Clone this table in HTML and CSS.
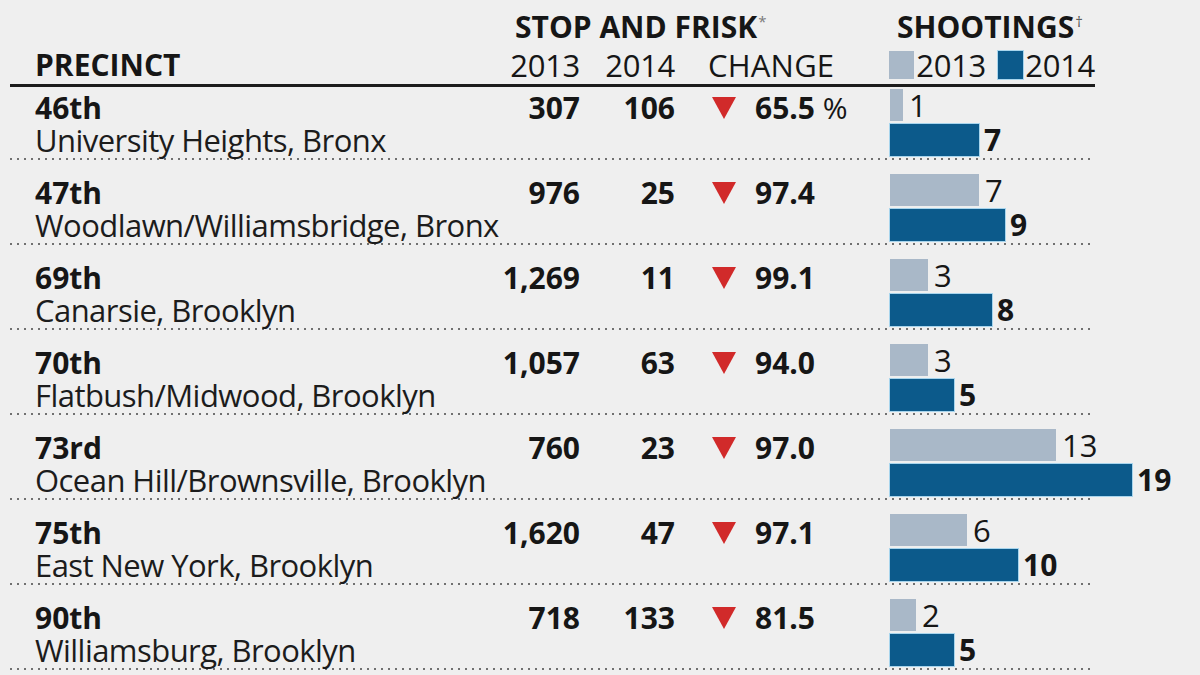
FILE: index.html
```html
<!DOCTYPE html>
<html lang="en">
<head>
<meta charset="utf-8">
<title>Stop and Frisk vs Shootings</title>
<link rel="stylesheet" href="styles.css">
</head>
<body>
<div class="chart">
  <div class="head">
    <div class="grid head-top">
      <div class="saf">STOP AND FRISK<span class="mark">*</span></div>
      <div class="sht">SHOOTINGS<span class="mark dag">†</span></div>
    </div>
    <div class="grid head-bot">
      <div class="hprec">PRECINCT</div>
      <div class="num reg">2013</div>
      <div class="num reg">2014</div>
      <div class="hchg">CHANGE</div>
      <div class="legend">
        <span class="sw sw-light"></span><span class="lg">2013</span>
        <span class="sw sw-dark"></span><span class="lg">2014</span>
      </div>
    </div>
  </div>

  <div class="grid row first">
    <div class="name">46th</div>
    <div class="num">307</div>
    <div class="num">106</div>
    <div class="chg"><span class="tri"></span><span class="pct">65.5<span class="pc"> %</span></span></div>
    <div class="hood">University Heights, Bronx</div>
    <div class="bars">
      <div class="bar-row"><span class="bar light" style="width:13px"></span><span class="bl">1</span></div>
      <div class="bar-row"><span class="bar dark" style="width:89px"></span><span class="bd">7</span></div>
    </div>
  </div>

  <div class="grid row">
    <div class="name">47th</div>
    <div class="num">976</div>
    <div class="num">25</div>
    <div class="chg"><span class="tri"></span><span class="pct">97.4</span></div>
    <div class="hood">Woodlawn/Williamsbridge, Bronx</div>
    <div class="bars">
      <div class="bar-row"><span class="bar light" style="width:89px"></span><span class="bl">7</span></div>
      <div class="bar-row"><span class="bar dark" style="width:115px"></span><span class="bd">9</span></div>
    </div>
  </div>

  <div class="grid row">
    <div class="name">69th</div>
    <div class="num">1,269</div>
    <div class="num">11</div>
    <div class="chg"><span class="tri"></span><span class="pct">99.1</span></div>
    <div class="hood">Canarsie, Brooklyn</div>
    <div class="bars">
      <div class="bar-row"><span class="bar light" style="width:38px"></span><span class="bl">3</span></div>
      <div class="bar-row"><span class="bar dark" style="width:102px"></span><span class="bd">8</span></div>
    </div>
  </div>

  <div class="grid row">
    <div class="name">70th</div>
    <div class="num">1,057</div>
    <div class="num">63</div>
    <div class="chg"><span class="tri"></span><span class="pct">94.0</span></div>
    <div class="hood">Flatbush/Midwood, Brooklyn</div>
    <div class="bars">
      <div class="bar-row"><span class="bar light" style="width:38px"></span><span class="bl">3</span></div>
      <div class="bar-row"><span class="bar dark" style="width:64px"></span><span class="bd">5</span></div>
    </div>
  </div>

  <div class="grid row">
    <div class="name">73rd</div>
    <div class="num">760</div>
    <div class="num">23</div>
    <div class="chg"><span class="tri"></span><span class="pct">97.0</span></div>
    <div class="hood">Ocean Hill/Brownsville, Brooklyn</div>
    <div class="bars">
      <div class="bar-row"><span class="bar light" style="width:166px"></span><span class="bl">13</span></div>
      <div class="bar-row"><span class="bar dark" style="width:242px"></span><span class="bd">19</span></div>
    </div>
  </div>

  <div class="grid row">
    <div class="name">75th</div>
    <div class="num">1,620</div>
    <div class="num">47</div>
    <div class="chg"><span class="tri"></span><span class="pct">97.1</span></div>
    <div class="hood">East New York, Brooklyn</div>
    <div class="bars">
      <div class="bar-row"><span class="bar light" style="width:77px"></span><span class="bl">6</span></div>
      <div class="bar-row"><span class="bar dark" style="width:128px"></span><span class="bd">10</span></div>
    </div>
  </div>

  <div class="grid row">
    <div class="name">90th</div>
    <div class="num">718</div>
    <div class="num">133</div>
    <div class="chg"><span class="tri"></span><span class="pct">81.5</span></div>
    <div class="hood">Williamsburg, Brooklyn</div>
    <div class="bars">
      <div class="bar-row"><span class="bar light" style="width:26px"></span><span class="bl">2</span></div>
      <div class="bar-row"><span class="bar dark" style="width:64px"></span><span class="bd">5</span></div>
    </div>
  </div>
</div>
</body>
</html>
```

FILE: styles.css
```css
html, body {
  margin: 0;
  padding: 0;
  background: #efefef;
}

body {
  font-family: "Open Sans", "Noto Sans", sans-serif;
  font-size: 30px;
  line-height: 32px;
  color: #161616;
  overflow: hidden;
}

.chart {
  margin-left: 10px;
  width: 1085px;
}

.grid {
  display: grid;
  grid-template-columns: 420px 125px 95px 215px 205px;
  padding-left: 25px;
}

/* header */
.head {
  padding-top: 11px;
  padding-bottom: 3px;
  border-bottom: 3px solid #1c1c1c;
}

.head-top {
  font-weight: 700;
  height: 32px;
}

.saf {
  grid-column: 2 / 5;
  padding-left: 60px;
  white-space: nowrap;
}

.sht {
  grid-column: 5;
  white-space: nowrap;
  padding-left: 7px;
}

.mark {
  font-size: 15px;
  font-weight: 400;
  color: #7a7a7a;
  vertical-align: top;
  line-height: 20px;
  margin-left: 1px;
}

.dag {
  color: #555;
}

.head-bot {
  margin-top: 6px;
  height: 32px;
}

.hprec {
  font-weight: 700;
}

.num {
  text-align: right;
  font-weight: 700;
  white-space: nowrap;
}

.num.reg {
  font-weight: 400;
  font-size: 31px;
  letter-spacing: -0.3px;
}

.hchg {
  padding-left: 33px;
  font-size: 31px;
  letter-spacing: 0.2px;
}

.legend {
  display: flex;
  align-items: center;
  margin-left: -1px;
  font-size: 31px;
  letter-spacing: -0.3px;
}

.sw {
  display: inline-block;
  width: 27px;
  height: 28px;
}

.sw-light {
  background: #a9b8c8;
}

.sw-dark {
  background: #0c5a8b;
  margin-left: 12px;
  box-shadow: 0 0 0 1px rgba(120, 195, 235, 0.6);
}

.lg {
  margin-left: 2px;
}

/* rows */
.row {
  grid-template-rows: 32px 32px;
  padding-top: 17px;
  padding-bottom: 4px;
  background-image: linear-gradient(to right, #707070 0 2px, transparent 2px);
  background-size: 7px 2px;
  background-repeat: repeat-x;
  background-position: 0 100%;
}

.row.first {
  padding-top: 5px;
}

.name {
  font-weight: 700;
}

.hood {
  grid-column: 1 / 5;
  grid-row: 2;
  white-space: nowrap;
  font-size: 31px;
  letter-spacing: -0.55px;
  color: #1c1c1c;
}

.chg {
  display: flex;
  align-items: flex-start;
  font-weight: 700;
}

.tri {
  width: 0;
  height: 0;
  margin-left: 37px;
  margin-top: 5px;
  border-left: 12px solid transparent;
  border-right: 12px solid transparent;
  border-top: 22px solid #d12a2a;
}

.pct {
  margin-left: 19px;
  white-space: nowrap;
}

.pc {
  font-weight: 400;
}

.bars {
  grid-column: 5;
  grid-row: 1 / 3;
  margin-top: -3px;
  display: flex;
  flex-direction: column;
  gap: 3px;
}

.bar-row {
  display: flex;
  align-items: center;
  height: 32px;
  white-space: nowrap;
}

.bar {
  display: block;
  height: 32px;
  flex: none;
}

.bar.light {
  background: #a9b8c8;
}

.bar.dark {
  background: #0c5a8b;
  box-shadow: 0 0 0 1px rgba(120, 195, 235, 0.6);
}

.bl {
  margin-left: 6px;
  font-weight: 400;
  font-size: 31px;
}

.bd {
  margin-left: 5px;
  font-weight: 700;
}
```
